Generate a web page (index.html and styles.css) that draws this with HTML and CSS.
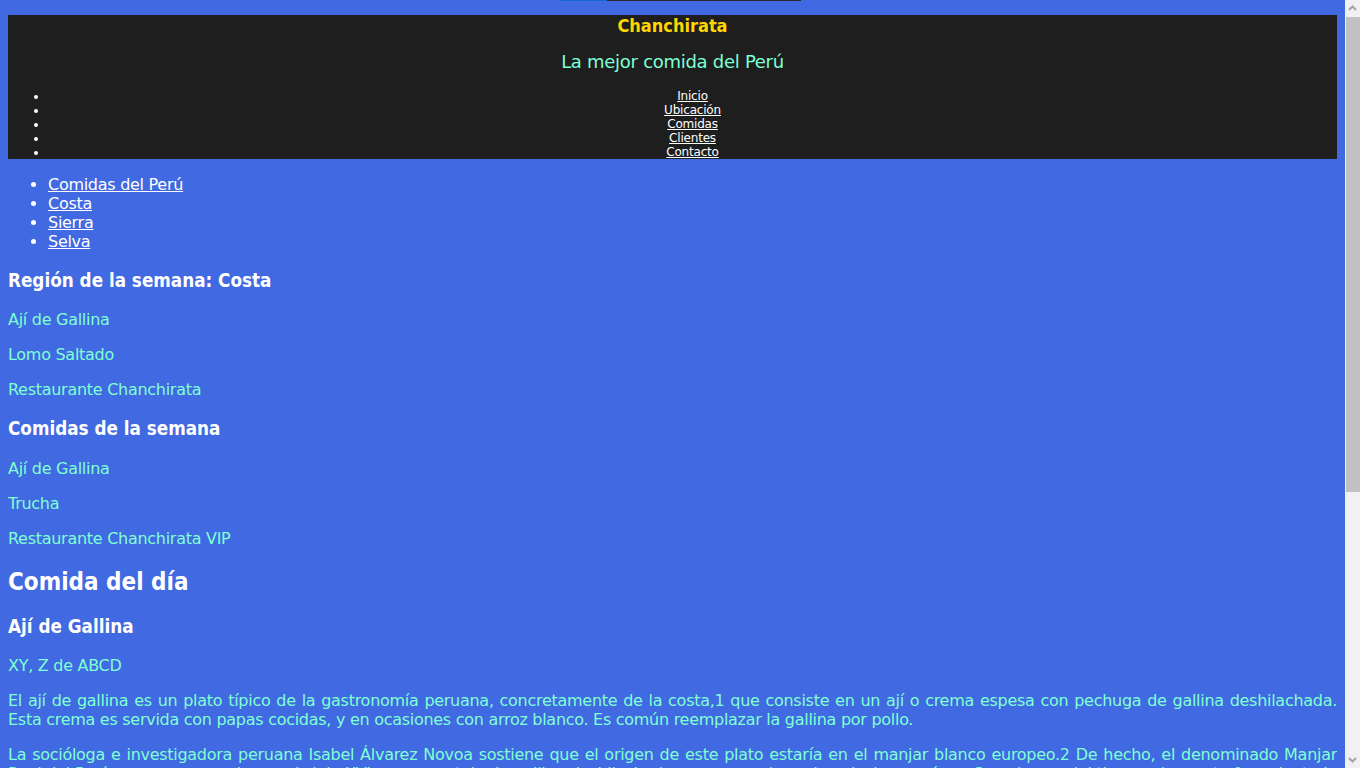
FILE: index.html
```html
<!DOCTYPE html>
<html lang="es">
<head>
<meta charset="utf-8">
<title>Chanchirata</title>
<link rel="stylesheet" href="styles.css">
</head>
<body>
<div class="topbar"><span class="topbar-fill"></span><span class="topbar-rest"></span></div>
<header class="site-header">
  <h1 class="brand">Chanchirata</h1>
  <p class="tagline">La mejor comida del Perú</p>
  <ul class="main-nav">
    <li><a href="#">Inicio</a></li>
    <li><a href="#">Ubicación</a></li>
    <li><a href="#">Comidas</a></li>
    <li><a href="#">Clientes</a></li>
    <li><a href="#">Contacto</a></li>
  </ul>
</header>
<ul class="regions">
  <li><a href="#">Comidas del Perú</a></li>
  <li><a href="#">Costa</a></li>
  <li><a href="#">Sierra</a></li>
  <li><a href="#">Selva</a></li>
</ul>
<h3>Región de la semana: Costa</h3>
<p>Ají de Gallina</p>
<p>Lomo Saltado</p>
<p>Restaurante Chanchirata</p>
<h3>Comidas de la semana</h3>
<p>Ají de Gallina</p>
<p>Trucha</p>
<p>Restaurante Chanchirata VIP</p>
<h2>Comida del día</h2>
<h3>Ají de Gallina</h3>
<p>XY, Z de ABCD</p>
<p class="text">El ají de gallina es un plato típico de la gastronomía peruana, concretamente de la costa,1 que consiste en un ají o crema espesa con pechuga de gallina deshilachada. Esta crema es servida con papas cocidas, y en ocasiones con arroz blanco. Es común reemplazar la gallina por pollo.</p>
<p class="text">La socióloga e investigadora peruana Isabel Álvarez Novoa sostiene que el origen de este plato estaría en el manjar blanco europeo.2 De hecho, el denominado Manjar Real del Perú, que se preparaba en el siglo XVI, era un potaje de gallina deshilachada con arroz, almendras, leche y azúcar. Con el paso del tiempo, la receta fue adaptada por los cocineros criollos y mestizos, quienes reemplazaron los ingredientes dulces por ají amarillo, pan remojado en leche, queso fresco y nueces.3</p>
<p class="text">Hoy en día el ají de gallina se sirve acompañado de papas amarillas, huevo duro, aceitunas de botija y arroz blanco, y es uno de los platos más representativos de la cocina limeña.</p>
<h3>Lomo Saltado</h3>
<p class="text">El lomo saltado es un plato típico de la gastronomía del Perú que consiste en trozos de carne de res salteados con cebolla, tomate, ají amarillo y especias, servido con papas fritas y arroz blanco.</p>
<h3>Trucha</h3>
<p class="text">La trucha frita es un plato muy popular en la sierra del Perú, preparado con truchas frescas de los lagos y ríos andinos, acompañado de papas, arroz y ensalada.</p>
<p class="text">Restaurante Chanchirata &mdash; Todos los derechos reservados.</p>
<div class="scrollbar" aria-hidden="true">
  <div class="sb-btn">
    <svg width="15" height="17" viewBox="0 0 15 17"><polyline points="4,10 7.5,6.5 11,10" fill="none" stroke="#a3a3a3" stroke-width="2"/></svg>
  </div>
  <div class="sb-track"><div class="sb-thumb"></div></div>
  <div class="sb-btn">
    <svg width="15" height="17" viewBox="0 0 15 17"><polyline points="4,7 7.5,10.5 11,7" fill="none" stroke="#a3a3a3" stroke-width="2"/></svg>
  </div>
</div>
</body>
</html>
```
FILE: styles.css
```css
html {
  background: #4169e1;
}
body {
  margin: 0 23px 8px 8px;
  font-family: "DejaVu Sans", sans-serif;
  letter-spacing: -0.28px;
  color: #7fffd4;
}
.topbar {
  display: flex;
  height: 1px;
  margin-left: 552px;
  width: 241px;
}
.topbar-fill {
  width: 47px;
  background: #1467d1;
}
.topbar-rest {
  flex: 1;
  background: #2a2a2a;
}
.site-header {
  margin-top: 14px;
  background: #1e1e1e;
  text-align: center;
}
.brand {
  margin: 0;
  padding-top: 1px;
  font-family: "DejaVu Sans Condensed", "DejaVu Sans", sans-serif;
  font-stretch: condensed;
  letter-spacing: 0;
  font-size: 18px;
  line-height: 20px;
  color: #ffd700;
}
.tagline {
  margin: 15px 0 16px;
  font-size: 18px;
  line-height: 22px;
  color: #7fffd4;
}
.main-nav {
  margin: 0;
  font-size: 12px;
  letter-spacing: -0.2px;
  color: #fff;
}
.main-nav a, .regions a {
  color: #fff;
}
.regions {
  color: #fff;
}
h2, h3 {
  color: #fff;
  font-family: "DejaVu Sans Condensed", "DejaVu Sans", sans-serif;
  font-stretch: condensed;
  letter-spacing: 0;
}
h3 {
  line-height: 22px;
}
.text {
  text-align: justify;
}
.scrollbar {
  position: fixed;
  top: 0;
  right: 0;
  width: 15px;
  height: 100vh;
  display: flex;
  flex-direction: column;
  background: #f1f1f1;
}
.sb-btn {
  height: 17px;
  flex: none;
}
.sb-btn svg {
  display: block;
}
.sb-track {
  flex: 1;
}
.sb-thumb {
  height: 475px;
  margin-left: 1px;
  background: #c1c1c1;
}
```
